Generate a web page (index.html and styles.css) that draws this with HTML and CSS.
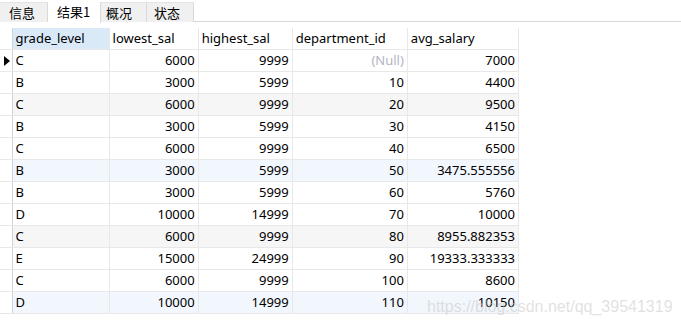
FILE: index.html
```html
<!DOCTYPE html>
<html lang="zh-CN">
<head>
    <meta charset="UTF-8">
    <title>结果1</title>
    <link rel="stylesheet" href="styles.css">
</head>
<body>
    <div class="tabs">
        <div class="tab">信息</div>
        <div class="tab active">结果1</div>
        <div class="tab">概况</div>
        <div class="tab">状态</div>
    </div>

    <div class="grid-wrap">
        <table class="grid">
            <colgroup>
                <col class="c-ind">
                <col class="c1">
                <col class="c2">
                <col class="c3">
                <col class="c4">
                <col class="c5">
            </colgroup>
            <thead>
                <tr>
                    <th class="ind"></th>
                    <th class="sel">grade_level</th>
                    <th>lowest_sal</th>
                    <th>highest_sal</th>
                    <th>department_id</th>
                    <th>avg_salary</th>
                </tr>
            </thead>
            <tbody>
                <tr><td class="ind"><span class="arrow"></span></td><td>C</td><td class="num">6000</td><td class="num">9999</td><td class="num null">(Null)</td><td class="num">7000</td></tr>
                <tr><td class="ind"></td><td>B</td><td class="num">3000</td><td class="num">5999</td><td class="num">10</td><td class="num">4400</td></tr>
                <tr class="grey"><td class="ind"></td><td>C</td><td class="num">6000</td><td class="num">9999</td><td class="num">20</td><td class="num">9500</td></tr>
                <tr><td class="ind"></td><td>B</td><td class="num">3000</td><td class="num">5999</td><td class="num">30</td><td class="num">4150</td></tr>
                <tr><td class="ind"></td><td>C</td><td class="num">6000</td><td class="num">9999</td><td class="num">40</td><td class="num">6500</td></tr>
                <tr class="blue"><td class="ind"></td><td>B</td><td class="num">3000</td><td class="num">5999</td><td class="num">50</td><td class="num">3475.555556</td></tr>
                <tr><td class="ind"></td><td>B</td><td class="num">3000</td><td class="num">5999</td><td class="num">60</td><td class="num">5760</td></tr>
                <tr><td class="ind"></td><td>D</td><td class="num">10000</td><td class="num">14999</td><td class="num">70</td><td class="num">10000</td></tr>
                <tr class="grey"><td class="ind"></td><td>C</td><td class="num">6000</td><td class="num">9999</td><td class="num">80</td><td class="num">8955.882353</td></tr>
                <tr><td class="ind"></td><td>E</td><td class="num">15000</td><td class="num">24999</td><td class="num">90</td><td class="num">19333.333333</td></tr>
                <tr><td class="ind"></td><td>C</td><td class="num">6000</td><td class="num">9999</td><td class="num">100</td><td class="num">8600</td></tr>
                <tr class="blue"><td class="ind"></td><td>D</td><td class="num">10000</td><td class="num">14999</td><td class="num">110</td><td class="num">10150</td></tr>
            </tbody>
        </table>
        <div class="watermark">https://blog.csdn.net/qq_39541319</div>
    </div>
</body>
</html>
```

FILE: styles.css
```css
body {
    margin: 0;
    background: #fff;
    font-family: "Noto Sans", "Noto Sans CJK SC", sans-serif;
    font-size: 13px;
    color: #000;
    width: 681px;
    height: 327px;
    overflow: hidden;
}

/* tab strip */
.tabs {
    display: flex;
    height: 22px;
    border-bottom: 1px solid #d9d9d9;
    box-sizing: border-box;
}
.tab {
    font-family: "Noto Sans CJK SC", sans-serif;
    font-size: 13px;
    line-height: 19px;
    margin-top: 2px;
    padding: 0 9px;
    background: #f0f0f0;
    border-right: 1px solid #d9d9d9;
    border-top: 1px solid #e4e4e4;
    height: 20px;
    box-sizing: border-box;
}
.tab:first-child { width: 48px; }
.tab.active {
    background: #fff;
    height: 21px;
    width: 53px;
    margin-bottom: -1px;
    border-top: none;
}
.tab:nth-child(3) { width: 46px; padding-left: 5px; }
.tab:nth-child(4) { width: 47px; padding-left: 7px; }

/* grid */
.grid-wrap {
    position: relative;
    padding-top: 6px;
}
.grid {
    border-collapse: collapse;
    table-layout: fixed;
    width: 519px;
}
.c-ind { width: 12px; }
.c1 { width: 97px; }
.c2 { width: 89px; }
.c3 { width: 94px; }
.c4 { width: 115px; }
.c5 { width: 111px; }

.grid th,
.grid td {
    height: 21px;
    padding: 0 3px;
    border: 1px solid #e8e8e8;
    border-top: none;
    white-space: nowrap;
    overflow: hidden;
    font-weight: normal;
    text-align: left;
    line-height: 21px;
}
.grid th {
    border-bottom: 1px solid #e8e8e8;
}
.grid th.sel { background: #d9e9f8; }
.grid .ind {
    padding: 0;
    border-left: none;
    border-right: 1px solid #d4d4d4;
    position: relative;
}
.grid td.num { text-align: right; }
.grid td.null { color: #b4b4c4; }
.grid tr.grey td { background: #f6f6f6; }
.grid tr.blue td { background: #f1f7fd; }
.grid tr.grey td.ind,
.grid tr.blue td.ind { background: #fff; }

.arrow {
    display: block;
    width: 0;
    height: 0;
    margin-left: 4px;
    border-top: 5px solid transparent;
    border-bottom: 5px solid transparent;
    border-left: 6px solid #000;
}

.watermark {
    position: absolute;
    left: 427px;
    top: 276px;
    font-family: "Liberation Sans", Arial, sans-serif;
    font-size: 16px;
    color: rgba(200, 200, 200, 0.55);
    white-space: nowrap;
}
```
